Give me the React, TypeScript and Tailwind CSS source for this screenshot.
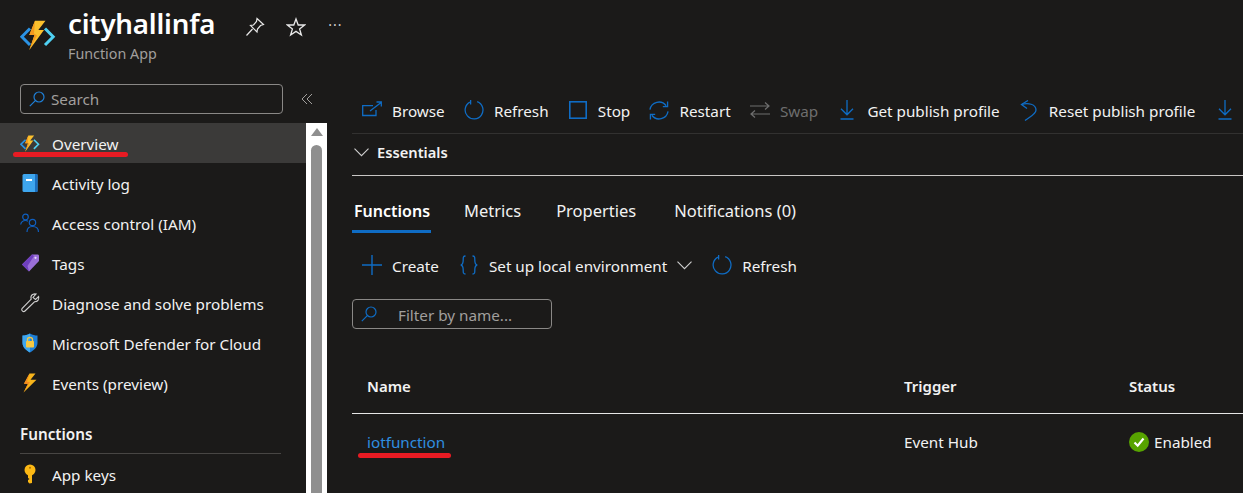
import React from "react";

const FnLogo = ({ s }: { s: number }) => (
  <svg width={s} height={s} viewBox="0 0 36 36" fill="none">
    <path d="M10 8.5 L1.8 16.7 L10 25" stroke="#2b93e4" strokeWidth="3" />
    <path d="M25 8.5 L33.2 16.7 L25 25" stroke="#4fd0f2" strokeWidth="3" />
    <path d="M15 0.7 L25.5 0.7 L18.3 10 L24 10 L9.3 30 L14.5 15 L9.3 15 Z" fill="#fbc02d" />
    <path d="M15 0.7 L9.3 15 L14.5 15 L9.3 30 L17 15.5 L14 13.5 Z" fill="#f59a1f" />
  </svg>
);

const Bolt = () => (
  <svg width="20" height="20" viewBox="0 0 20 20">
    <path d="M9.5 0.5 L15.5 0.5 L10.5 6.8 L16.5 6.8 L3.5 19.5 L8 10.8 L4 10.8 Z" fill="#f7b41b" />
    <path d="M9.5 0.5 L4 10.8 L8 10.8 L3.5 19.5 L10 9 L7 8.8 Z" fill="#f58a1f" />
  </svg>
);

const Book = () => (
  <svg width="20" height="20" viewBox="0 0 20 20">
    <rect x="2.5" y="1" width="15" height="18" rx="1.5" fill="#3ea6ee" />
    <rect x="15" y="1" width="2.5" height="18" fill="#1a6fc0" />
    <rect x="6" y="6" width="6" height="2" fill="#fff" />
  </svg>
);

const People = () => (
  <svg width="20" height="20" viewBox="0 0 20 20" fill="none" stroke="#0f5fc0" strokeWidth="1.2">
    <circle cx="5.5" cy="4" r="2.8" />
    <path d="M0.7 11.5 C1.2 8.5 3 7.5 5.5 7.5 C6.5 7.5 7.3 7.7 8 8.2" />
    <circle cx="12.5" cy="9.5" r="3.2" />
    <path d="M7 19 C7 15 9 13.5 12.5 13.5 C16 13.5 18.5 15 18.5 19" />
  </svg>
);

const Tag = () => (
  <svg width="20" height="20" viewBox="0 0 20 20">
    <path d="M12 1.5 L18 1.5 Q19 1.5 19 3 L19 8 L9 18.5 L2 11.5 Z" fill="#9a6fd8" />
    <path d="M2 11.5 L12 1.5 L14 3 L7.5 13 L9 18.5 Z" fill="#6f3fbd" />
    <circle cx="15.5" cy="4.8" r="1.1" fill="#e8dcf8" />
  </svg>
);

const Wrench = () => (
  <svg width="20" height="20" viewBox="0 0 20 20" fill="none" stroke="#d0d0d0" strokeWidth="1.1">
    <path d="M12.5 1.5 C15 0.5 15.5 1 16 1 L13 4.5 L15.5 6.5 L18.6 3.5 C19.3 6 18 9 14.5 8.8 L5 18 C3.5 19.5 0.8 17.5 2 15.5 L11.2 6.2 C10.5 4 11 2.5 12.5 1.5 Z" />
  </svg>
);

const Shield = () => (
  <svg width="20" height="20" viewBox="0 0 20 20">
    <path d="M10 0.5 C12.5 2 15 2.5 17.5 2.5 L17.5 10 C17.5 14.5 13.5 17.5 10 19.5 C6.5 17.5 2.5 14.5 2.5 10 L2.5 2.5 C5 2.5 7.5 2 10 0.5 Z" fill="#1f7fd6" />
    <path d="M10 0.5 C7.5 2 5 2.5 2.5 2.5 L2.5 10 C2.5 14.5 6.5 17.5 10 19.5 Z" fill="#3ea6ee" />
    <rect x="6" y="8" width="8" height="6.5" rx="0.8" fill="#f5c842" />
    <path d="M7.5 8 L7.5 6.5 C7.5 3.8 12.5 3.8 12.5 6.5 L12.5 8" fill="none" stroke="#f5c842" strokeWidth="1.3" />
  </svg>
);

const Key = () => (
  <svg width="20" height="20" viewBox="0 0 20 20">
    <circle cx="10" cy="6" r="5.5" fill="#fcb814" />
    <path d="M8 9 L12 9 L12 19 L9.5 19.5 L8 18 L8 16 L9.5 15 L8 14 Z" fill="#fcb814" />
    <circle cx="10" cy="3.8" r="1" fill="#a86f00" />
  </svg>
);

const Item = ({ icon, label, color }: { icon: React.ReactNode; label: string; color?: string }) => (
  <div className="flex h-6 items-center">
    <span className="mr-2.5 flex h-6 w-5 items-center justify-center">{icon}</span>
    <span className={`pt-[3px] ${color ?? "text-[#f2f2f2]"}`}>{label}</span>
  </div>
);

const blue = "#0f6cc4";

const Browse = () => (
  <svg width="20" height="20" viewBox="0 0 20 20" fill="none" stroke={blue} strokeWidth="1.3">
    <path d="M11 5.7 L0.7 5.7 L0.7 15.5 L14 15.5 L14 10" />
    <path d="M8 11 L18.8 2.8 M14.5 2 L19.3 2 L19.3 6.5" />
  </svg>
);
const Refresh = () => (
  <svg width="22" height="22" viewBox="0 0 22 22" fill="none" stroke={blue} strokeWidth="1.4">
    <path d="M6.5 2.3 A9.8 9.8 0 1 0 14.5 1.8" />
    <path d="M7.3 0 L7.3 5" />
  </svg>
);
const Stop = () => (
  <svg width="18" height="18" viewBox="0 0 18 18" fill="none" stroke={blue} strokeWidth="1.6">
    <rect x="0.8" y="0.8" width="16.4" height="16.4" />
  </svg>
);
const Restart = () => (
  <svg width="21" height="21" viewBox="0 0 21 21" fill="none" stroke={blue} strokeWidth="1.4">
    <path d="M1 9.5 A9.5 9.5 0 0 1 18 5.5" />
    <path d="M19.5 1 L19.5 6.5 L14.5 6.5" />
    <path d="M20 11.5 A9.5 9.5 0 0 1 3 15.5" />
    <path d="M1.5 20 L1.5 14.5 L6.5 14.5" />
  </svg>
);
const Swap = () => (
  <svg width="20" height="16" viewBox="0 0 20 16" fill="none" stroke="#6e6e6e" strokeWidth="1.2">
    <path d="M0 4 L19 4 M15 0.5 L19 4 L15 7.5" />
    <path d="M20 12 L1 12 M5 8.5 L1 12 L5 15.5" />
  </svg>
);
const Download = () => (
  <svg width="14" height="20" viewBox="0 0 14 20" fill="none" stroke={blue} strokeWidth="1.3">
    <path d="M7 0 L7 14.5 M1 8.8 L7 14.8 L13 8.8 M0.5 19 L13.5 19" />
  </svg>
);
const Undo = () => (
  <svg width="17" height="21" viewBox="0 0 17 21" fill="none" stroke={blue} strokeWidth="1.3">
    <path d="M1.5 4.5 C8 2.5 16 4 16 10 C16 14 11 16 5 20.5" />
    <path d="M8 0.5 L1.5 4.5 L7 8.5" />
  </svg>
);
const Plus = () => (
  <svg width="20" height="20" viewBox="0 0 20 20" fill="none" stroke={blue} strokeWidth="1.4">
    <path d="M10 0 L10 20 M0 10 L20 10" />
  </svg>
);
const Braces = () => (
  <svg width="18" height="20" viewBox="0 0 18 20" fill="none" stroke={blue} strokeWidth="1.3">
    <path d="M5.5 1 C3 1 3.2 2.5 3.2 5 C3.2 8 3 9.5 0.8 10 C3 10.5 3.2 12 3.2 15 C3.2 17.5 3 19 5.5 19" />
    <path d="M12.5 1 C15 1 14.8 2.5 14.8 5 C14.8 8 15 9.5 17.2 10 C15 10.5 14.8 12 14.8 15 C14.8 17.5 15 19 12.5 19" />
  </svg>
);
const Search = ({ c }: { c: string }) => (
  <svg width="16" height="16" viewBox="0 0 16 16" fill="none" stroke={c} strokeWidth="1.2">
    <circle cx="10" cy="6" r="5" />
    <path d="M6.3 9.7 L0.8 15.2" />
  </svg>
);

const nav = [
  { l: "Activity log", i: <Book /> },
  { l: "Access control (IAM)", i: <People /> },
  { l: "Tags", i: <Tag /> },
  { l: "Diagnose and solve problems", i: <Wrench /> },
  { l: "Microsoft Defender for Cloud", i: <Shield /> },
  { l: "Events (preview)", i: <Bolt /> },
];

const NavRow = ({ icon, label }: { icon: React.ReactNode; label: string }) => (
  <div className="flex h-10 items-center pl-5 text-[#f2f2f2]">
    <span className="mr-2.5 -ml-0.5 flex h-5 w-6 items-center justify-center">{icon}</span>
    <span className="pt-[3px]">{label}</span>
  </div>
);

export default function App() {
  return (
    <div
      className="flex h-[493px] w-[1243px] overflow-hidden bg-[#1b1a19] text-[15.25px] text-[#f2f2f2]"
      style={{ fontFamily: '"Noto Sans", "Open Sans", sans-serif' }}
    >
      {/* Left column */}
      <div className="flex w-[327px] shrink-0 flex-col">
        <header className="flex h-[84px] shrink-0 pt-[3px] pl-5">
          <div className="mt-[17px] mr-3">
            <FnLogo s={36} />
          </div>
          <div>
            <div className="text-[27.7px] leading-[40px] font-semibold tracking-[-0.2px] text-white">cityhallinfa</div>
            <div className="mt-[1px] text-[14.3px] leading-[20px] text-[#a19f9d]">Function App</div>
          </div>
          <div className="mt-[14px] ml-[30px] flex gap-[21px]">
            <svg width="20" height="20" viewBox="0 0 20 20" fill="none" stroke="#e8e8e8" strokeWidth="1.2">
              <path d="M12 1.5 L18.5 7.5 L15.5 8.5 L12.5 12 L12 15 L5.5 8.5 L8.5 8 L11.5 4.5 Z M7.5 12 L1.5 18.5" />
            </svg>
            <svg width="20" height="20" viewBox="0 0 20 20" fill="none" stroke="#e8e8e8" strokeWidth="1.3">
              <path d="M10 2 L12.2 8 L18.6 8 L13.6 11.9 L15.4 18 L10 14.4 L4.6 18 L6.4 11.9 L1.4 8 L7.8 8 Z" />
            </svg>
            <span className="mt-[-3px] ml-px text-[14px] tracking-[1px] text-[#d0d0d0]">···</span>
          </div>
        </header>

        <div className="flex h-[39px] shrink-0 items-start pl-5">
          <div className="flex h-[30px] w-[263px] items-center rounded-sm border border-[#8a8886] pl-2">
            <Search c="#1f7fd6" />
            <span className="ml-1.5 text-[#a19f9d]">Search</span>
          </div>
          <svg className="mt-[9px] ml-[18px]" width="12" height="12" viewBox="0 0 12 12" fill="none" stroke="#a19f9d" strokeWidth="1">
            <path d="M6 1 L1 6 L6 11 M11 1 L6 6 L11 11" />
          </svg>
        </div>

        <div className="flex min-h-0 flex-1">
          <div className="relative w-[306px] shrink-0">
            <div className="flex h-10 items-center bg-[#3b3a39] pl-5 text-[#f2f2f2]">
              <span className="mr-2.5 -ml-0.5 flex h-5 w-6 items-center justify-center pt-[3px]">
                <FnLogo s={20} />
              </span>
              <span className="pt-[3px]">Overview</span>
            </div>
            <div className="absolute top-[29px] left-[13px] h-[5px] w-[115px] rounded-full bg-[#e81b23]" />
            {nav.map((n) => (
              <NavRow key={n.l} icon={n.i} label={n.l} />
            ))}
            <div className="pt-[21px] pl-5 leading-[20px] font-semibold text-[#f2f2f2]">Functions</div>
            <div className="mt-[9px] ml-5 h-px w-[261px] bg-[#484644]" />
            <NavRow icon={<Key />} label="App keys" />
          </div>
          <div className="flex w-[21px] shrink-0 justify-center bg-white">
            <div className="flex flex-col items-center">
              <div className="mt-[5px] h-0 w-0 border-x-[6px] border-b-[8px] border-x-transparent border-b-[#8f8f8f]" />
              <div className="mt-[9px] w-[11px] flex-1 rounded-t-full bg-[#8f8f8f]" />
            </div>
          </div>
        </div>
      </div>

      {/* Main column */}
      <main className="min-w-0 flex-1 pl-[25px]">
        <div className="flex h-[134px] items-end border-b border-[#323130] pb-[11px] pl-[10px]">
          <div className="flex items-center gap-[19.2px] whitespace-nowrap">
            <Item icon={<Browse />} label="Browse" />
            <Item icon={<Refresh />} label="Refresh" />
            <Item icon={<Stop />} label="Stop" />
            <Item icon={<Restart />} label="Restart" />
            <Item icon={<Swap />} label="Swap" color="text-[#6e6e6e]" />
            <Item icon={<Download />} label="Get publish profile" />
            <Item icon={<Undo />} label="Reset publish profile" />
            <Item icon={<Download />} label="" />
          </div>
        </div>

        <div className="flex h-[42px] items-center border-b border-[#c8c6c4] pb-[4px] pl-[2px]">
          <svg width="15" height="9" viewBox="0 0 15 9" fill="none" stroke="#d0d0d0" strokeWidth="1.1">
            <path d="M0.5 0.7 L7.5 7.7 L14.5 0.7" />
          </svg>
          <span className="ml-[8px] text-[14.7px] font-semibold">Essentials</span>
        </div>

        <div className="mt-[20px] flex h-[37px] text-[16.5px] leading-[30px]">
          <div className="w-[79px] border-b-[3px] border-[#0f6cc4] pl-[2px] text-[16px] font-semibold text-white">Functions</div>
          <div className="ml-[33px]">Metrics</div>
          <div className="ml-[35px]">Properties</div>
          <div className="ml-[38px]">Notifications (0)</div>
        </div>

        <div className="mt-[20px] flex h-[24px] items-center pl-[10px] whitespace-nowrap">
          <Item icon={<Plus />} label="Create" />
          <span className="ml-[20px] flex items-center">
            <span className="mr-[10px] flex w-5 justify-center"><Braces /></span>
            <span className="pt-[3px]">Set up local environment</span>
            <svg className="ml-[10px]" width="15" height="9" viewBox="0 0 15 9" fill="none" stroke="#d0d0d0" strokeWidth="1.1">
              <path d="M0.5 0.7 L7.5 7.7 L14.5 0.7" />
            </svg>
          </span>
          <span className="ml-[20px]"><Item icon={<Refresh />} label="Refresh" /></span>
        </div>

        <div className="mt-[22px] flex h-[30px] w-[200px] items-center rounded-sm border border-[#8a8886] pl-2">
          <Search c="#0f6cc4" />
          <span className="ml-[21px] pt-[2px] text-[#a19f9d]">Filter by name...</span>
        </div>

        <div className="mt-[35px] grid h-[50px] grid-cols-[537px_225px_1fr] items-center border-b border-[#e6e6e6] pb-[5px] pl-[15px] text-[15px] font-semibold">
          <div>Name</div>
          <div>Trigger</div>
          <div>Status</div>
        </div>
        <div className="relative grid h-[56px] grid-cols-[537px_225px_1fr] items-center pl-[15px]">
          <div className="text-[#2f8fe0]">iotfunction</div>
          <div>Event Hub</div>
          <div className="flex items-center gap-[5px]">
            <svg width="20" height="20" viewBox="0 0 20 20">
              <circle cx="10" cy="10" r="10" fill="#57a300" />
              <path d="M5.5 10.5 L8.7 13.7 L14.5 6.5" fill="none" stroke="#fff" strokeWidth="2.2" />
            </svg>
            <span>Enabled</span>
          </div>
          <div className="absolute top-[39px] left-[6px] h-[5px] w-[93px] rounded-full bg-[#e81b23]" />
        </div>
      </main>
    </div>
  );
}
